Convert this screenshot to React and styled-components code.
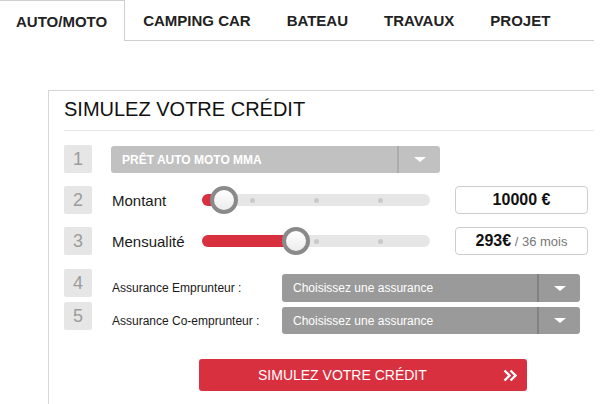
import React from "react";
import styled, { createGlobalStyle } from "styled-components";

const GlobalStyle = createGlobalStyle`
  body {
    margin: 0;
    background: #fff;
    font-family: "Liberation Sans", Arial, sans-serif;
    color: #222;
  }
`;

const RED = "#d9303f";

const Page = styled.div`
  width: 604px;
  height: 404px;
  overflow: hidden;
`;

const TabBar = styled.div`
  display: flex;
  width: 594px;
  height: 41px;
  box-sizing: border-box;
  border-bottom: 1px solid #cfcfcf;
`;

const Tab = styled.div`
  display: flex;
  align-items: center;
  box-sizing: border-box;
  height: ${(p) => (p.$active ? "41px" : "40px")};
  padding: 0 ${(p) => (p.$active ? "17px 0 16px" : "18px")};
  font-size: 15px;
  font-weight: bold;
  color: #222;
  white-space: nowrap;
  background: #fff;
  border-top: ${(p) => (p.$active ? "1px solid #cfcfcf" : "none")};
  border-right: ${(p) => (p.$active ? "1px solid #cfcfcf" : "none")};
  padding-top: ${(p) => (p.$active ? "0" : "1px")};
`;

const Panel = styled.div`
  margin: 49px 0 0 48px;
  width: 546px;
  height: 330px;
  box-sizing: border-box;
  border-top: 1px solid #d6d6d6;
  border-left: 1px solid #d6d6d6;
  padding-left: 15px;
`;

const Title = styled.h2`
  margin: 0;
  padding: 7px 0 9px;
  font-size: 20px;
  line-height: 23px;
  font-weight: normal;
  color: #111;
  border-bottom: 1px solid #e6e6e6;
`;

const Rows = styled.div`
  padding-top: 14px;
`;

const Row = styled.div`
  display: flex;
  align-items: ${(p) => (p.$top ? "flex-start" : "center")};
  height: 28px;
  margin-top: ${(p) => p.$gap || 0}px;
`;

const Step = styled.div`
  flex-shrink: 0;
  width: 28px;
  height: 28px;
  border-radius: 2px;
  background: #e6e6e6;
  color: #9c9c9c;
  font-size: 18px;
  display: flex;
  align-items: center;
  justify-content: center;
`;

const Label = styled.div`
  flex-shrink: 0;
  margin-left: 20px;
  width: ${(p) => p.$w}px;
  font-size: ${(p) => p.$size || 15}px;
  color: #1a1a1a;
`;

const Select = styled.div`
  display: flex;
  align-items: stretch;
  box-sizing: border-box;
  width: ${(p) => p.$w}px;
  height: ${(p) => p.$h || 28}px;
  margin-left: ${(p) => p.$ml || 0}px;
  align-self: ${(p) => (p.$bottom ? "flex-end" : "auto")};
  border-radius: 3px;
  background: ${(p) => (p.$light ? "#c1c1c1" : "#9a9a9a")};
  color: #fff;
  font-size: 12px;
  font-weight: ${(p) => (p.$bold ? "bold" : "normal")};
`;

const SelectText = styled.div`
  flex: 1;
  display: flex;
  align-items: center;
  padding-left: 11px;
  white-space: nowrap;
`;

const Caret = styled.div`
  width: 41px;
  display: flex;
  align-items: center;
  justify-content: center;
  border-left: 2px solid ${(p) => (p.$light ? "#acacac" : "#828282")};
  &::after {
    content: "";
    border-left: 6px solid transparent;
    border-right: 6px solid transparent;
    border-top: 5px solid #fff;
  }
`;

const Field = styled.div`
  display: flex;
  align-items: center;
  margin-top: 5px;
`;

const Track = styled.div`
  position: relative;
  flex-shrink: 0;
  width: 228px;
  height: 12px;
  border-radius: 6px;
  background: #e6e6e6;
`;

const Dot = styled.span`
  position: absolute;
  top: 4px;
  width: 5px;
  height: 5px;
  margin-left: -2px;
  border-radius: 50%;
  background: #c9c9c9;
`;

const Fill = styled.div`
  position: absolute;
  left: 0;
  top: 0;
  height: 12px;
  border-radius: 6px;
  background: ${RED};
`;

const Thumb = styled.div`
  position: absolute;
  top: -8px;
  width: 28px;
  height: 28px;
  margin-left: -14px;
  box-sizing: border-box;
  border-radius: 50%;
  border: 4px solid #8a8a8a;
  background: linear-gradient(#ffffff, #ececec);
`;

const ValueBox = styled.div`
  flex-shrink: 0;
  margin-left: 25px;
  width: 133px;
  height: 28px;
  box-sizing: border-box;
  border: 1px solid #cdcdcd;
  border-radius: 4px;
  display: flex;
  align-items: center;
  justify-content: center;
  font-size: 16px;
  font-weight: bold;
  color: #111;
  white-space: pre;
`;

const Muted = styled.span`
  font-size: 13px;
  font-weight: normal;
  color: #777;
`;

const SubmitButton = styled.button`
  display: flex;
  align-items: center;
  margin: 29px 0 0 135px;
  width: 328px;
  height: 32px;
  padding: 0 10px 0 59px;
  box-sizing: border-box;
  border: none;
  border-radius: 3px;
  background: ${RED};
  color: #fff;
  font-family: inherit;
  font-size: 14px;
  cursor: pointer;
  svg {
    margin-left: auto;
  }
`;

const Slider = ({ value }) => (
  <Track>
    {[50, 114, 178].map((x) => (
      <Dot key={x} style={{ left: x }} />
    ))}
    <Fill style={{ width: value }} />
    <Thumb style={{ left: value }} />
  </Track>
);

const tabs = ["AUTO/MOTO", "CAMPING CAR", "BATEAU", "TRAVAUX", "PROJET"];

export default function App() {
  return (
    <Page>
      <GlobalStyle />
      <TabBar>
        {tabs.map((t, i) => (
          <Tab key={t} $active={i === 0}>
            {t}
          </Tab>
        ))}
      </TabBar>
      <Panel>
        <Title>SIMULEZ VOTRE CRÉDIT</Title>
        <Rows>
          <Row>
            <Step>1</Step>
            <Select $w={329} $h={27} $ml={19} $light $bold $bottom>
              <SelectText>PRÊT AUTO MOTO MMA</SelectText>
              <Caret $light />
            </Select>
          </Row>
          <Row $gap={13}>
            <Step>2</Step>
            <Label $w={90}>Montant</Label>
            <Slider value={22} />
            <ValueBox>10000 €</ValueBox>
          </Row>
          <Row $gap={13}>
            <Step>3</Step>
            <Label $w={90}>Mensualité</Label>
            <Slider value={94} />
            <ValueBox>
              293€<Muted> / 36 mois</Muted>
            </ValueBox>
          </Row>
          <Row $gap={14} $top>
            <Step>4</Step>
            <Field>
              <Label $w={170} $size={12}>Assurance Emprunteur :</Label>
              <Select $w={298}>
                <SelectText>Choisissez une assurance</SelectText>
                <Caret />
              </Select>
            </Field>
          </Row>
          <Row $gap={5} $top>
            <Step>5</Step>
            <Field>
              <Label $w={170} $size={12}>Assurance Co-emprunteur :</Label>
              <Select $w={298} $h={27}>
                <SelectText>Choisissez une assurance</SelectText>
                <Caret />
              </Select>
            </Field>
          </Row>
        </Rows>
        <SubmitButton>
          SIMULEZ VOTRE CRÉDIT
          <svg width="14" height="13" viewBox="0 0 14 13" fill="none">
            <polyline points="1.5,1.5 6.5,6.5 1.5,11.5" stroke="#fff" strokeWidth="2.4" />
            <polyline points="7.5,1.5 12.5,6.5 7.5,11.5" stroke="#fff" strokeWidth="2.4" />
          </svg>
        </SubmitButton>
      </Panel>
    </Page>
  );
}
